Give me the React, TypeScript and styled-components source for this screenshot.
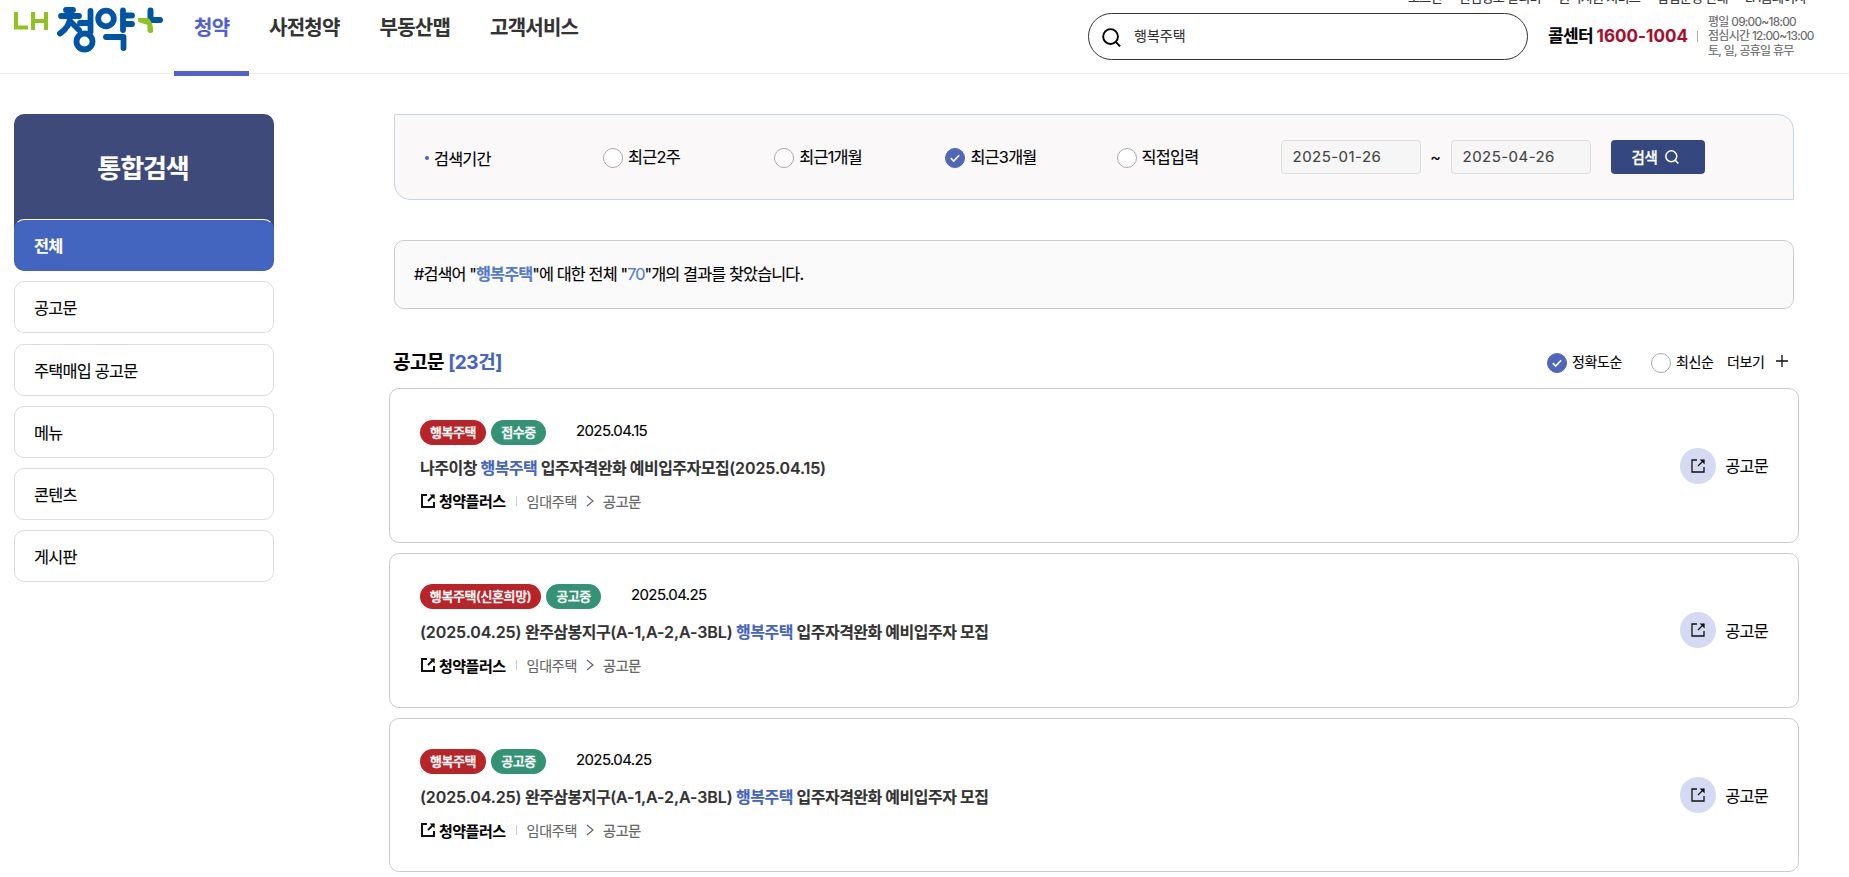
import React from 'react';
import styled, { createGlobalStyle, css } from 'styled-components';

const Global = createGlobalStyle`
  * { box-sizing: border-box; }
  html, body { margin: 0; padding: 0; background: #fff; overflow: hidden; }
  body { font-family: Inter, 'Noto Sans CJK KR', sans-serif; font-size: 16px; color: #000; -webkit-text-stroke: 0.12px currentColor; }
  button, input { font: inherit; letter-spacing: inherit; }
  h1, h2, h3, p, ul { margin: 0; padding: 0; }
  ul { list-style: none; }
`;

const Page = styled.div`width: 1849px; height: 877px; overflow: hidden;`;

const Header = styled.header`
  display: flex;
  align-items: flex-start;
  height: 74px;
  border-bottom: 1px solid #eee;
`;
const Logo = styled.a`
  display: block;
  margin-left: 14px;
  width: 160px;
  height: 60px;
`;
const Nav = styled.nav`display: flex; gap: 0; height: 76px;`;
const NavItem = styled.a<{ $active?: boolean; $width: number }>`
  flex: none;
  width: ${p => p.$width}px;
  height: 76px;
  padding-left: 20px;
  line-height: 56px;
  font-size: 20px;
  font-weight: 700;
  letter-spacing: -0.75px;
  white-space: nowrap;
  color: ${p => (p.$active ? '#5162d0' : '#333')};
  ${p => p.$active && css`border-bottom: 5px solid #5162d0;`}
`;
const HeaderRight = styled.div`
  display: flex;
  flex-direction: column;
  margin-left: auto;
  width: 761px;
`;
const Utility = styled.div`
  display: flex;
  gap: 17.3px;
  height: 5px;
  margin-left: 320px;
  align-items: flex-end;
  overflow: hidden;
  font-size: 13px;
  line-height: 16px;
  letter-spacing: -0.7px;
  color: #333;
  white-space: nowrap;
`;
const SearchLine = styled.div`display: flex; margin-top: 8px;`;
const SearchField = styled.label`
  display: flex;
  align-items: center;
  width: 440px;
  height: 47px;
  padding: 0 0 0 13px;
  border: 1px solid #333;
  border-radius: 24px;
  gap: 13px;
  font-size: 14px;
  color: #333;
  svg { color: #000; margin-top: 2px; }
  span { padding-bottom: 3px; }
`;
const CallCenter = styled.strong`
  margin: 11px 0 0 20px;
  width: 149px;
  font-size: 17px;
  line-height: 24px;
  letter-spacing: -0.6px;
  white-space: nowrap;
  color: #000;
  em { font-style: normal; color: #a50f2d; letter-spacing: 0.05px; }
`;
const Hours = styled.div`
  font-size: 12px;
  line-height: 14.7px;
  letter-spacing: -0.72px;
  color: #666;
  white-space: nowrap;
  margin-top: 1.5px;
`;
const Rule = styled.i<{ $h: number; $m: string; $color?: string }>`
  flex: none;
  width: 1px;
  height: ${p => p.$h}px;
  margin: ${p => p.$m};
  background: ${p => p.$color || '#aaa'};
`;

const Body = styled.main`display: flex; padding-top: 40px; padding-left: 14px;`;
const Side = styled.aside`width: 260px; flex: none;`;
const SideTitle = styled.h2`
  height: 116px;
  margin-bottom: -11px;
  padding-right: 2px;
  border-radius: 10px 10px 0 0;
  background: #3d4a7a;
  color: #fff;
  text-align: center;
  font-size: 26px;
  line-height: 110px;
  letter-spacing: -1.1px;
`;
const SideList = styled.ul`display: flex; flex-direction: column; gap: 10.25px;`;
const SideItem = styled.li<{ $active?: boolean }>`
  height: 52px;
  padding-left: 19px;
  border: 1px solid #ddd;
  border-radius: 10px;
  font-size: 16.3px;
  line-height: 52px;
  letter-spacing: -0.75px;
  ${p => p.$active && css`
    border-color: #4365c0;
    border-top-color: #fff;
    background: #4365c0;
    color: #fff;
    font-weight: 700;
  `}
`;

const Content = styled.section`width: 1410px; margin-left: 115px;`;
const Filter = styled.form`
  display: flex;
  align-items: flex-start;
  width: 1400px;
  height: 86px;
  margin-left: 5px;
  padding: 25px 0 0 30px;
  border: 1px solid #c6d2e8;
  border-radius: 0 16px 0 16px;
  background: #faf8f9;
`;
const FilterLabel = styled.div`
  display: flex;
  align-items: center;
  gap: 5px;
  width: 178px;
  height: 36px;
  font-size: 16.3px;
  letter-spacing: -0.8px;
  &::before { content: ''; width: 4px; height: 4px; border-radius: 50%; background: #4365c0; }
`;
const Radio = styled.label<{ $width: number; $size?: number; $ls?: number; $lift?: number }>`
  display: flex;
  flex: none;
  align-items: center;
  gap: 5px;
  width: ${p => p.$width}px;
  height: 36px;
  font-size: ${p => p.$size || 16.3}px;
  letter-spacing: ${p => p.$ls ?? -0.75}px;
  white-space: nowrap;
  span { padding-bottom: ${p => p.$lift ?? 4}px; }
`;
const Dot = styled.i<{ $on?: boolean }>`
  display: grid;
  place-items: center;
  width: 20px;
  height: 20px;
  border-radius: 50%;
  border: 1px solid ${p => (p.$on ? '#5066bd' : '#aaa')};
  background: ${p => (p.$on ? '#5066bd' : '#fff')};
`;
const DateBox = styled.div`
  width: 140px;
  height: 34px;
  padding-left: 11px;
  border: 1px solid #ddd;
  border-radius: 4px;
  background: #f6f6f6;
  color: #444;
  font-size: 15px;
  line-height: 32px;
  letter-spacing: 0.45px;
`;
const Tilde = styled.span`width: 30px; line-height: 34px; text-align: center;`;
const SearchButton = styled.button`
  display: flex;
  align-items: center;
  gap: 8px;
  width: 94px;
  height: 34px;
  margin-left: 20px;
  padding: 0 0 1px 21px;
  border: 0;
  border-radius: 4px;
  background: #34477f;
  color: #fff;
  font-size: 14.5px;
  font-weight: 500;
  letter-spacing: -0.4px;
  -webkit-text-stroke: 0.3px currentColor;
`;
const Summary = styled.p`
  width: 1400px;
  height: 69px;
  margin: 40px 0 0 5px;
  padding-left: 19px;
  border: 1px solid #ccc;
  border-radius: 10px;
  background: #fafafa;
  line-height: 66px;
  font-size: 16.3px;
  letter-spacing: -0.9px;
  b, em { font-style: normal; color: #547bcb; }
`;
const ListHead = styled.div`
  display: flex;
  align-items: center;
  height: 36px;
  margin: 36px 0 7.45px 5px;
`;
const ListTitle = styled.h3`
  width: 1153px;
  margin-left: -1px;
  margin-right: 1px;
  padding-bottom: 6px;
  font-size: 19px;
  letter-spacing: -0.45px;
  em { font-style: normal; color: #4365c0; }
`;
const More = styled.a`
  display: flex;
  align-items: center;
  gap: 12px;
  padding-bottom: 5px;
  font-size: 14px;
  letter-spacing: -0.4px;
`;

const Card = styled.article`
  display: flex;
  height: 154.6px;
  margin-bottom: 10px;
  padding: 30.4px 30px 0 30px;
  border: 1px solid #ccc;
  border-radius: 10px;
`;
const CardBody = styled.div`flex: 1;`;
const BadgeRow = styled.div`display: flex; align-items: center; height: 25px;`;
const Badge = styled.span<{ $tone: 'red' | 'green'; $width: number }>`
  width: ${p => p.$width}px;
  height: 25px;
  margin-right: 5px;
  border-radius: 13px;
  background: ${p => (p.$tone === 'red' ? '#b82427' : '#349374')};
  color: #fff;
  text-align: center;
  font-size: 13px;
  font-weight: 500;
  line-height: 24px;
  letter-spacing: -0.4px;
  white-space: nowrap;
  -webkit-text-stroke: 0.35px currentColor;
`;
const CardDate = styled.span`
  margin: 0 0 4px 25px;
  font-size: 15px;
  letter-spacing: -0.62px;
`;
const CardTitle = styled.p`
  margin-top: 12px;
  height: 24px;
  line-height: 22px;
  font-size: 16px;
  font-weight: 600;
  letter-spacing: -0.5px;
  color: #333;
  em { font-style: normal; color: #4365c0; }
`;
const Latin = styled.span`letter-spacing: -0.1px;`;
const Path = styled.div`
  display: flex;
  align-items: center;
  margin-top: 8px;
  height: 24px;
  font-size: 14px;
  letter-spacing: -0.25px;
  color: #666;
  strong { margin-left: 4px; font-size: 15px; letter-spacing: -0.5px; color: #000; }
  > svg:first-child { margin-left: 1px; }
`;
const Chevron = styled.svg`margin: 0 9px;`;
const Leaf = styled.span`-webkit-text-stroke: 0.3px currentColor;`;
const OpenLink = styled.a`
  display: flex;
  align-items: center;
  gap: 9px;
  height: 36px;
  margin-top: 28px;
  font-size: 16.3px;
  letter-spacing: -0.75px;
  span { padding-bottom: 1px; }
`;
const OpenCircle = styled.i`
  display: grid;
  place-items: center;
  width: 36px;
  height: 36px;
  border-radius: 50%;
  background: #d5daf2;
`;

const SearchIcon = ({ size, w }: { size: number; w: number }) => (
  <svg width={size} height={size} viewBox="0 0 20 20" fill="none" stroke="currentColor" strokeWidth={w}>
    <circle cx="9" cy="9" r="7.8" />
    <path d="M14.3 14.3 L19 19.3" />
  </svg>
);
const OutIcon = ({ w }: { w: number }) => (
  <svg width="14" height="14" viewBox="0 0 14 14" fill="none" stroke="#111" strokeWidth={w}>
    <path d="M6 1H1V13H13V8M13 1L7 7" />
    <path d="M8.600 0.400H13.600V5.400Z" fill="#111" stroke="none" />
  </svg>
);
const Check = () => (
  <svg width="12" height="10" viewBox="0 0 12 10" fill="none" stroke="#fff" strokeWidth="1.6">
    <path d="M1.8 5.1L4.7 8L10.2 2.2" />
  </svg>
);
const LogoMark = () => (
  <svg width="152" height="56" viewBox="14 0 152 56" fill="none" strokeLinecap="round" strokeLinejoin="round">
    <g stroke="#8fc31f" strokeWidth="4" strokeLinecap="butt" strokeLinejoin="miter">
      <path d="M16 12V27.500H28M33 12V30M46 12V30M33 21H46" />
    </g>
    <g stroke="#0054a6" strokeWidth="5.800">
      <path d="M66 10H73M61 16H79M70 17C70 25 65 30 60 33.500M71 22L79 30M80 23H88M90.500 11V32" />
      <circle cx="84.500" cy="41.500" r="8" />
      <circle cx="106" cy="18.500" r="7.800" />
      <path d="M123 10.500V30M124 15.500H132M124 24H132M106 37H123.500V48" />
    </g>
    <path d="M150.500 10.500V20M150.500 20H160" stroke="#0054a6" strokeWidth="6" />
    <path d="M138 18H148C152.500 21 153.500 28 153 32C151 34 148 33 147.500 31V25C145 23 140 24 138 21Z" fill="#8fc31f" />
  </svg>
);

const periods = ['최근2주', '최근1개월', '최근3개월', '직접입력'];
const menus = ['전체', '공고문', '주택매입 공고문', '메뉴', '콘텐츠', '게시판'];
const items = [
  { kind: '행복주택', kw: 66, state: '접수중', date: '2025.04.15', pre: '나주이창 ', post: ' 입주자격완화 예비입주자모집(2025.04.15)' },
  { kind: '행복주택(신혼희망)', kw: 121, state: '공고중', date: '2025.04.25', pre: '(2025.04.25) 완주삼봉지구(A-1,A-2,A-3BL) ', post: ' 입주자격완화 예비입주자 모집' },
  { kind: '행복주택', kw: 66, state: '공고중', date: '2025.04.25', pre: '(2025.04.25) 완주삼봉지구(A-1,A-2,A-3BL) ', post: ' 입주자격완화 예비입주자 모집' },
];

// Latin runs are spaced wider than the Hangul around them.
const mixed = (text: string) =>
  text.split(/(\([^)]*\))/).map((part, i) => (part.startsWith('(') ? <Latin key={i}>{part}</Latin> : part));

export default function App() {
  return (
    <Page>
      <Global />
      <Header>
        <Logo><LogoMark /></Logo>
        <Nav>
          <NavItem $active $width={75}>청약</NavItem>
          <NavItem $width={110.5}>사전청약</NavItem>
          <NavItem $width={110.5}>부동산맵</NavItem>
          <NavItem $width={120}>고객서비스</NavItem>
        </Nav>
        <HeaderRight>
          <Utility>
            <span>로그인</span><span>관심정보 알리미</span><span>원격지원 서비스</span><span>팝업운영 안내</span><span>LH홈페이지</span>
          </Utility>
          <SearchLine>
            <SearchField><SearchIcon size={19} w={2} /><span>행복주택</span></SearchField>
            <CallCenter>콜센터 <em>1600-1004</em></CallCenter>
            <Rule $h={11} $m="18px 10px 0 0" />
            <Hours>평일 09:00~18:00<br />점심시간 12:00~13:00<br />토, 일, 공휴일 휴무</Hours>
          </SearchLine>
        </HeaderRight>
      </Header>
      <Body>
        <Side>
          <SideTitle>통합검색</SideTitle>
          <SideList>{menus.map((m, i) => <SideItem key={m} $active={i === 0}>{m}</SideItem>)}</SideList>
        </Side>
        <Content>
          <Filter>
            <FilterLabel>검색기간</FilterLabel>
            {periods.map((p, i) => (
              <Radio key={p} $width={i === 3 ? 164 : 171.2}>
                <Dot $on={i === 2}>{i === 2 && <Check />}</Dot><span>{p}</span>
              </Radio>
            ))}
            <DateBox>2025-01-26</DateBox>
            <Tilde>~</Tilde>
            <DateBox>2025-04-26</DateBox>
            <SearchButton type="button">검색<SearchIcon size={14} w={2.2} /></SearchButton>
          </Filter>
          <Summary>#검색어 "<b>행복주택</b>"에 대한 전체 "<em>70</em>"개의 결과를 찾았습니다.</Summary>
          <ListHead>
            <ListTitle>공고문 <em>[23건]</em></ListTitle>
            <Radio $width={104} $size={14} $ls={-0.4} $lift={4}><Dot $on><Check /></Dot><span>정확도순</span></Radio>
            <Radio $width={76} $size={14} $ls={-0.4} $lift={4}><Dot /><span>최신순</span></Radio>
            <More>더보기
              <svg width="12" height="12" viewBox="0 0 12 12" stroke="#111" strokeWidth="1.3"><path d="M6 0V12M0 6H12" /></svg>
            </More>
          </ListHead>
          {items.map((it, i) => (
            <Card key={i}>
              <CardBody>
                <BadgeRow>
                  <Badge $tone="red" $width={it.kw}>{it.kind}</Badge>
                  <Badge $tone="green" $width={55}>{it.state}</Badge>
                  <CardDate>{it.date}</CardDate>
                </BadgeRow>
                <CardTitle>{mixed(it.pre)}<em>행복주택</em>{mixed(it.post)}</CardTitle>
                <Path>
                  <OutIcon w={2} /><strong>청약플러스</strong>
                  <Rule $h={10} $m="0 10px" $color="#ccc" />
                  <span>임대주택</span>
                  <Chevron width="8" height="12" viewBox="0 0 8 12" fill="none" stroke="#666" strokeWidth="1.2"><path d="M1 1L7 6L1 11" /></Chevron>
                  <Leaf>공고문</Leaf>
                </Path>
              </CardBody>
              <OpenLink><OpenCircle><OutIcon w={1.3} /></OpenCircle><span>공고문</span></OpenLink>
            </Card>
          ))}
        </Content>
      </Body>
    </Page>
  );
}
